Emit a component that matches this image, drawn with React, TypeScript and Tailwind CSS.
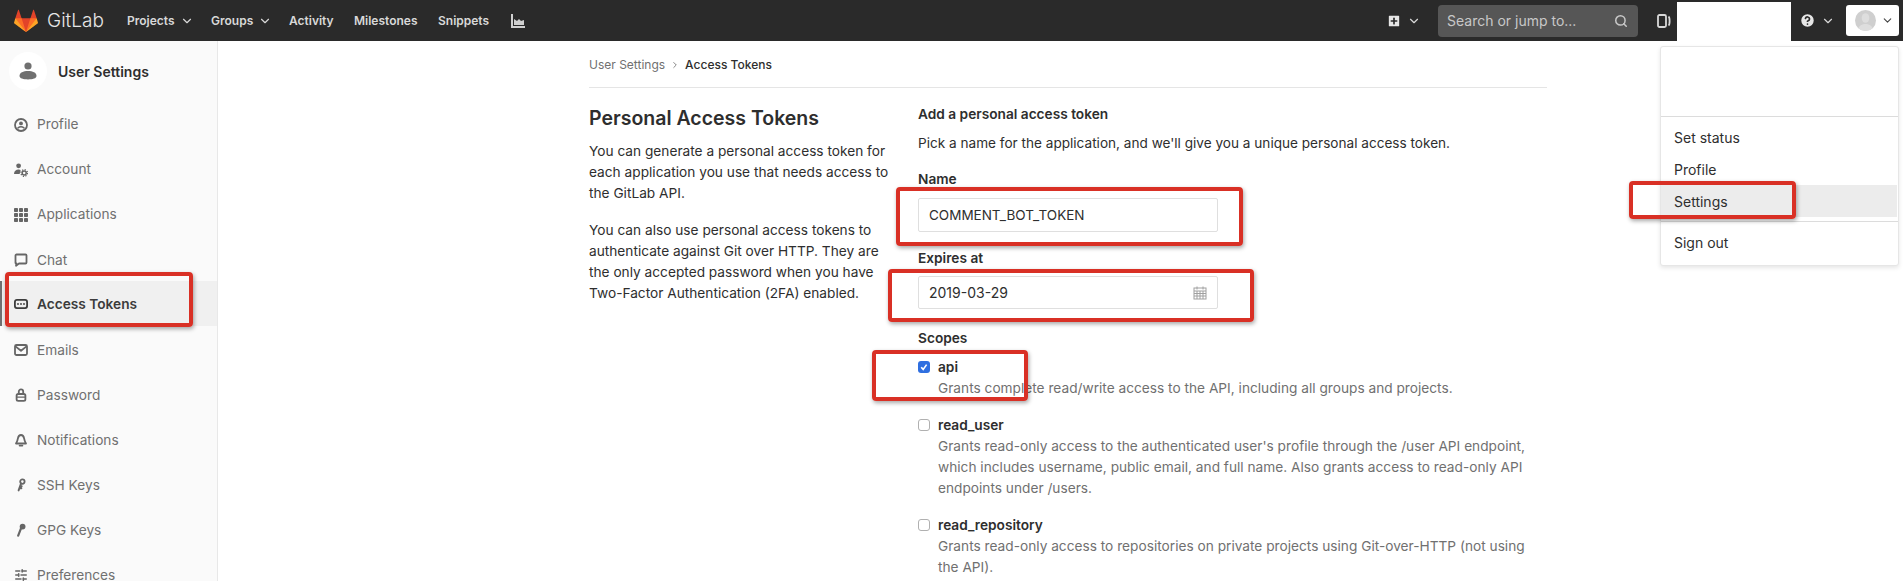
import {
  ChevronDown,
  ChevronRight,
  CircleHelp,
  Search,
  SlidersHorizontal,
  SquarePlus,
} from 'lucide-react';
import type { ReactNode } from 'react';

const Tanuki = () => (
  <svg viewBox="0 0 36 36" className="h-[24px] w-[24px]">
    <path fill="#e24329" d="M2 14l9.38 9v-9l-4-12.28c-.205-.632-1.176-.632-1.388 0z" />
    <path fill="#e24329" d="M34 14l-9.38 9v-9l4-12.28c.205-.632 1.176-.632 1.388 0z" />
    <path fill="#e24329" d="M18,34.38 3,14 33,14 Z" />
    <path fill="#fc6d26" d="M18,34.38 11.38,14 2,14 6,25Z" />
    <path fill="#fc6d26" d="M18,34.38 24.62,14 34,14 30,25Z" />
    <path fill="#fca326" d="M2 14L.1 20.16c-.18.565 0 1.2.5 1.56l17.42 12.66z" />
    <path fill="#fca326" d="M34 14l1.9 6.16c.18.565 0 1.2-.5 1.56L18 34.38z" />
  </svg>
);

const Glyph = ({ children }: { children: ReactNode }) => (
  <svg
    viewBox="0 0 14 14"
    className="h-[14px] w-[14px]"
    fill="none"
    stroke="currentColor"
    strokeWidth="1.8"
    strokeLinecap="round"
    strokeLinejoin="round"
  >
    {children}
  </svg>
);

const ProfileIcon = () => (
  <Glyph>
    <circle cx="7" cy="7" r="6" />
    <circle cx="7" cy="5.4" r="1.9" fill="currentColor" stroke="none" />
    <path d="M4 9.9c1.6-1.2 4.4-1.2 6 0" strokeWidth="1.5" />
  </Glyph>
);

const AccountIcon = () => (
  <Glyph>
    <circle cx="4.6" cy="2.8" r="2.4" fill="currentColor" stroke="none" />
    <path d="M0 11c0-3 2-4.6 4.6-4.6 1 0 1.6.2 2 .5L5.6 11z" fill="currentColor" stroke="none" />
    <circle cx="10.2" cy="10" r="2" strokeWidth="1.5" />
    <circle cx="10.2" cy="10" r="3.3" strokeWidth="1.3" strokeDasharray="1.2 1.4" strokeLinecap="butt" />
  </Glyph>
);

const AppsIcon = () => (
  <svg viewBox="0 0 14 14" className="h-[14px] w-[14px]" fill="currentColor">
    {[0, 5, 10].map((y) =>
      [0, 5, 10].map((x) => <rect key={`${x}-${y}`} x={x} y={y} width="4" height="4" rx="0.8" />),
    )}
  </svg>
);

const ChatIcon = () => (
  <Glyph>
    <path d="M1.5 2.5a1 1 0 011-1h9a1 1 0 011 1v7a1 1 0 01-1 1H5L2 12.8 2.4 10.5h-.2a.8.8 0 01-.7-1z" />
  </Glyph>
);

const TokenIcon = () => (
  <Glyph>
    <rect x="0.9" y="2.9" width="12.2" height="8.2" rx="2" />
    <circle cx="4" cy="7" r="0.9" fill="currentColor" stroke="none" />
    <circle cx="7" cy="7" r="0.9" fill="currentColor" stroke="none" />
    <circle cx="10" cy="7" r="0.9" fill="currentColor" stroke="none" />
  </Glyph>
);

const MailIcon = () => (
  <Glyph>
    <rect x="1" y="2" width="12" height="10" rx="1.5" />
    <path d="M1.8 3.6L7 7.8l5.2-4.2" />
  </Glyph>
);

const LockIcon = () => (
  <Glyph>
    <rect x="2.6" y="6" width="8.8" height="6.8" rx="1.6" />
    <path d="M4.8 6V3.6a2.2 2.2 0 014.4 0V6" />
    <path d="M3 9.2h8" strokeWidth="1.2" />
  </Glyph>
);

const BellIcon = () => (
  <Glyph>
    <path d="M7 2c-1.8 0-2.7 1.4-3.1 3.4-.3 1.8-.8 3.4-1.9 5.1h10c-1.1-1.7-1.6-3.3-1.9-5.1C9.7 3.4 8.8 2 7 2z" />
    <path d="M5.6 12.6h2.8" />
  </Glyph>
);

const SshKeyIcon = () => (
  <Glyph>
    <circle cx="8.4" cy="3.6" r="2.2" />
    <path d="M7 5.6L4.6 12.4M5.4 10.2h2M6.1 8.2h1.6" strokeWidth="1.9" />
  </Glyph>
);

const GpgKeyIcon = () => (
  <Glyph>
    <circle cx="8.6" cy="3.6" r="2.9" fill="currentColor" stroke="none" />
    <path d="M7 5.4L4.2 12.6" strokeWidth="2.2" />
  </Glyph>
);

const ChartIcon = () => (
  <svg viewBox="0 0 14 14" className="h-[14px] w-[14px]" fill="#d0d0d0">
    <path d="M0 0h2v12h12v2H0z" />
    <path d="M3 11V5l3 2 2-2 2 2 3-1v5z" />
  </svg>
);

const TodoIcon = () => (
  <svg viewBox="0 0 14 14" className="h-[14px] w-[14px]" fill="none" stroke="#d8d8d8" strokeWidth="1.8">
    <rect x="1" y="1" width="8" height="12" rx="1.5" />
    <path d="M11.5 2.5c1.5 1 1.5 8 0 9" />
  </svg>
);

const PersonIcon = () => (
  <svg viewBox="0 0 20 20" className="h-[20px] w-[20px]" fill="#707070">
    <circle cx="10" cy="5" r="3.6" />
    <path d="M1.5 15c0-3.6 3.8-5 8.5-5s8.5 1.4 8.5 5c0 2.4-3.8 3.4-8.5 3.4S1.5 17.4 1.5 15z" />
  </svg>
);

const Avatar = () => (
  <svg viewBox="0 0 21 21" className="h-[21px] w-[21px] rounded-full bg-[#cfcfcf]">
    <ellipse cx="10.5" cy="8" rx="3.8" ry="4.8" fill="#dedede" />
    <path d="M3 21c0-5 3.4-7 7.5-7s7.5 2 7.5 7z" fill="#dedede" />
  </svg>
);

const navLinks: { label: string; width: string; caret?: boolean }[] = [
  { label: 'Projects', width: 'w-[84px]', caret: true },
  { label: 'Groups', width: 'w-[78px]', caret: true },
  { label: 'Activity', width: 'w-[65px]' },
  { label: 'Milestones', width: 'w-[84px]' },
  { label: 'Snippets', width: 'w-[73px]' },
];

const sidebarItems: { label: string; icon: ReactNode; active?: boolean }[] = [
  { label: 'Profile', icon: <ProfileIcon /> },
  { label: 'Account', icon: <AccountIcon /> },
  { label: 'Applications', icon: <AppsIcon /> },
  { label: 'Chat', icon: <ChatIcon /> },
  { label: 'Access Tokens', icon: <TokenIcon />, active: true },
  { label: 'Emails', icon: <MailIcon /> },
  { label: 'Password', icon: <LockIcon /> },
  { label: 'Notifications', icon: <BellIcon /> },
  { label: 'SSH Keys', icon: <SshKeyIcon /> },
  { label: 'GPG Keys', icon: <GpgKeyIcon /> },
  { label: 'Preferences', icon: <SlidersHorizontal className="h-[14px] w-[14px]" strokeWidth={2.6} /> },
];

const scopes: { name: string; checked?: boolean; lines: string[]; gap: string }[] = [
  {
    name: 'api',
    checked: true,
    lines: ['Grants complete read/write access to the API, including all groups and projects.'],
    gap: 'mb-[16px]',
  },
  {
    name: 'read_user',
    lines: [
      "Grants read-only access to the authenticated user's profile through the /user API endpoint,",
      'which includes username, public email, and full name. Also grants access to read-only API',
      'endpoints under /users.',
    ],
    gap: 'mb-[16px]',
  },
  {
    name: 'read_repository',
    lines: [
      'Grants read-only access to repositories on private projects using Git-over-HTTP (not using',
      'the API).',
    ],
    gap: '',
  },
];

const redBox = 'absolute rounded-[4px] border-[4px] border-[#d93025] shadow-[1px_2px_4px_rgba(0,0,0,0.35)]';

const Header = () => (
  <header className="flex h-[41px] shrink-0 items-center bg-[#2a2a2a] text-[#d8d8d8]">
    <div className="ml-[14px] flex w-[113px] items-center">
      <Tanuki />
      <span className="ml-[9px] text-[19px] leading-none font-light text-[#e6e6e6]">GitLab</span>
    </div>
    {navLinks.map((link) => (
      <div key={link.label} className={`flex items-center text-[12px] font-semibold ${link.width}`}>
        {link.label}
        {link.caret && <ChevronDown className="ml-[5px] h-[14px] w-[14px]" strokeWidth={2} />}
      </div>
    ))}
    <ChartIcon />
    <div className="ml-auto flex items-center">
      <SquarePlus className="h-[16px] w-[16px] fill-[#e6e6e6] text-[#2a2a2a]" strokeWidth={2.5} />
      <ChevronDown className="ml-[5px] h-[14px] w-[14px]" strokeWidth={2} />
      <div className="mr-[19px] ml-[17px] flex h-[32px] w-[200px] items-center justify-between rounded-[4px] bg-[#565656] pr-[10px] pl-[9px] text-[14px] text-[#c8c8c8]">
        Search or jump to...
        <Search className="h-[14px] w-[14px]" strokeWidth={2.6} />
      </div>
      <TodoIcon />
      <div className="mt-[2px] ml-[6px] h-[39px] w-[114px] self-end bg-white" />
      <CircleHelp className="ml-[8px] h-[17px] w-[17px] fill-[#e6e6e6] text-[#2a2a2a]" strokeWidth={2.4} />
      <ChevronDown className="ml-[5px] h-[14px] w-[14px]" strokeWidth={2} />
      <div className="mr-[4px] ml-[11px] flex h-[31px] w-[53px] items-center rounded-[3px] bg-white pl-[9px]">
        <Avatar />
        <ChevronDown className="ml-[5px] h-[13px] w-[13px] text-[#444444]" strokeWidth={2} />
      </div>
    </div>
  </header>
);

const Sidebar = () => (
  <aside className="w-[218px] shrink-0 border-r border-[#e8e8e8] bg-[#fafafa]">
    <div className="flex h-[60px] items-center pl-[9px]">
      <div className="flex h-[38px] w-[38px] items-center justify-center rounded-full bg-white">
        <PersonIcon />
      </div>
      <span className="ml-[11px] text-[14px] font-semibold text-[#2e2e2e]">User Settings</span>
    </div>
    <nav>
      {sidebarItems.map((item) => (
        <div
          key={item.label}
          className={
            item.active
              ? 'flex h-[45.1px] items-center border-l-2 border-[#707070] bg-[#f0f0f0] pt-[1px] pl-[12px] text-[13.7px] font-semibold text-[#3c3c3c]'
              : 'flex h-[45.1px] items-center pt-[2px] pl-[14px] text-[13.7px] text-[#707070]'
          }
        >
          <span className={item.active ? 'flex w-[23px] text-[#3c3c3c]' : 'flex w-[23px] text-[#666666]'}>
            {item.icon}
          </span>
          {item.label}
        </div>
      ))}
    </nav>
  </aside>
);

const Content = () => (
  <main className="flex-1 pl-[371px]">
    <div className="w-[958px]">
      <div className="flex h-[47px] items-center border-b border-[#e5e5e5] pt-[2px] text-[12px] text-[#707070]">
        User Settings
        <ChevronRight className="mx-[5px] h-[10px] w-[10px]" />
        <span className="font-medium text-[#2e2e2e]">Access Tokens</span>
      </div>
      <div className="flex pt-[15px]">
        <div className="w-[329px] shrink-0 text-[13.7px] leading-[21px] text-[#2e2e2e]">
          <h4 className="mt-[3px] mb-[10px] text-[19.5px] leading-[25px] font-semibold text-[#2e2e2e]">
            Personal Access Tokens
          </h4>
          <p className="mb-[16px]">
            You can generate a personal access token for
            <br />
            each application you use that needs access to
            <br />
            the GitLab API.
          </p>
          <p>
            You can also use personal access tokens to
            <br />
            authenticate against Git over HTTP. They are
            <br />
            the only accepted password when you have
            <br />
            Two-Factor Authentication (2FA) enabled.
          </p>
        </div>
        <div className="flex-1 text-[13.7px] leading-[21px] text-[#2e2e2e]">
          <h5 className="mt-[1px] font-semibold">Add a personal access token</h5>
          <p className="mt-[8px] text-[13.6px]">
            Pick a name for the application, and we'll give you a unique personal access token.
          </p>
          <label className="mt-[15px] block font-semibold">Name</label>
          <div className="mt-[8px] flex h-[34px] w-[300px] items-center rounded-[2px] border border-[#dfdfdf] px-[10px] text-[13.5px]">
            COMMENT_BOT_TOKEN
          </div>
          <label className="mt-[16px] block font-semibold">Expires at</label>
          <div className="mt-[7px] flex h-[33px] w-[300px] items-center justify-between rounded-[2px] border border-[#dfdfdf] px-[10px] text-[14px]">
            2019-03-29
            <svg viewBox="0 0 14 14" className="h-[15px] w-[14px]" fill="none" stroke="#a0a0a0" strokeWidth="1">
              <rect x="1" y="2.5" width="12" height="11" />
              <path d="M1 5.5h12M1 8h12M1 10.5h12M4 5.5v8M7 5.5v8M10 5.5v8M4 1v3M10 1v3" />
            </svg>
          </div>
          <label className="mt-[19px] block font-semibold">Scopes</label>
          <div className="mt-[8px]">
            {scopes.map((scope) => (
              <div key={scope.name} className={`flex ${scope.gap}`}>
                <span
                  className={
                    scope.checked
                      ? 'mt-[4px] flex h-[12px] w-[12px] items-center justify-center rounded-[3px] bg-[#2f6fe0]'
                      : 'mt-[4px] h-[12px] w-[12px] rounded-[3px] border border-[#b0b0b0] bg-white'
                  }
                >
                  {scope.checked && (
                    <svg viewBox="0 0 12 12" className="h-[12px] w-[12px]" fill="none" stroke="white" strokeWidth="1.6">
                      <path d="M3.2 6.2l2 2.2 3.4-4.8" />
                    </svg>
                  )}
                </span>
                <div className="ml-[8px]">
                  <div className="font-semibold">{scope.name}</div>
                  <div className="text-[#707070]">
                    {scope.lines.map((line) => (
                      <div key={line}>{line}</div>
                    ))}
                  </div>
                </div>
              </div>
            ))}
          </div>
        </div>
      </div>
    </div>
  </main>
);

const UserMenu = () => (
  <div className="absolute top-[46px] left-[1660px] h-[220px] w-[239px] rounded-[3px] border border-[#e6e6e6] bg-white text-[14px] text-[#2e2e2e] shadow-[0_2px_4px_rgba(0,0,0,0.1)]">
    <div className="h-[70px] border-b border-[#dcdcdc]" />
    <div className="flex h-[36px] items-center pt-[4px] pl-[13px]">Set status</div>
    <div className="flex h-[32px] items-center pl-[13px]">Profile</div>
    <div className="mr-[1px] flex h-[32px] items-center bg-[#ececec] pl-[13px]">Settings</div>
    <div className="mt-[4px] flex h-[41px] items-center border-t border-[#dcdcdc] pl-[13px]">Sign out</div>
  </div>
);

export default function App() {
  return (
    <div className="relative flex h-screen flex-col overflow-hidden bg-white font-['Inter',sans-serif]">
      <Header />
      <div className="flex min-h-0 flex-1">
        <Sidebar />
        <Content />
      </div>
      <UserMenu />
      {/* red annotation boxes drawn over the screenshot */}
      <div className={`${redBox} top-[272px] left-[5px] h-[55px] w-[188px]`} />
      <div className={`${redBox} top-[187px] left-[896px] h-[59px] w-[347px]`} />
      <div className={`${redBox} top-[269px] left-[888px] h-[53px] w-[366px]`} />
      <div className={`${redBox} top-[350px] left-[872px] h-[51px] w-[156px]`} />
      <div className={`${redBox} top-[181px] left-[1629px] h-[38px] w-[167px]`} />
    </div>
  );
}
